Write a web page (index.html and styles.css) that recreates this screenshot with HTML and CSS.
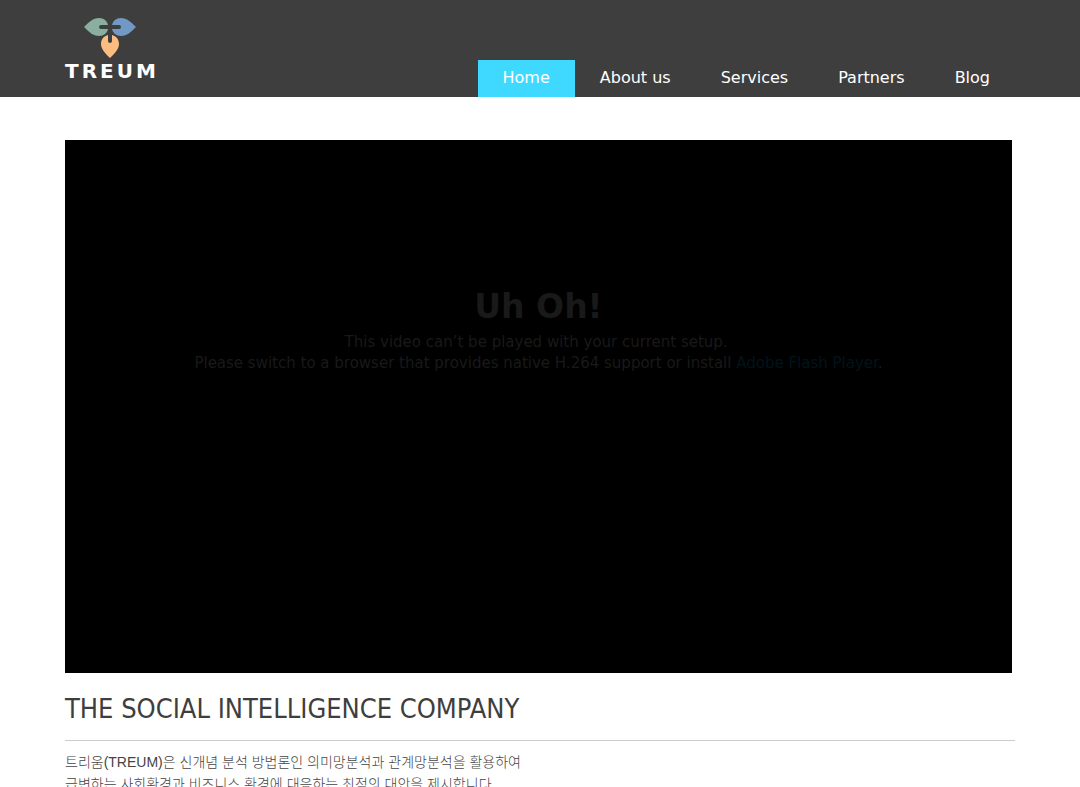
FILE: index.html
```
<!DOCTYPE html>
<html lang="ko">
<head>
    <meta charset="UTF-8">
    <meta name="viewport" content="width=device-width, initial-scale=1.0">
    <title>TREUM</title>
    <link rel="stylesheet" href="styles.css">
</head>
<body>
    <header class="header">
        <div class="container header-inner">
            <a class="logo" href="#">
                <svg class="logo-mark" viewBox="0 0 52 40" aria-hidden="true">
                    <path fill="#8aae9f" d="M0 9C5 4 9 0 15 0C20 0 23 3 24 7H17Q15 7 15 9Q15 11 17 11H24C23 15 20 18 15 18C9 18 5 14 0 9Z"/>
                    <path fill="#7299c6" d="M52 9C47 4 43 0 37 0C32 0 29 3 28 7H35Q37 7 37 9Q37 11 35 11H28C29 15 32 18 37 18C43 18 47 14 52 9Z"/>
                    <path fill="#fdbd80" d="M26 40C21 35 17 31 17 26C17 21 20 18 24 17V23Q24 25 26 25Q28 25 28 23V17C32 18 35 21 35 26C35 31 31 35 26 40Z"/>
                </svg>
                <span class="logo-text">TREUM</span>
            </a>
            <nav class="menu">
                <a class="menu-item active" href="#">Home</a>
                <a class="menu-item" href="#">About us</a>
                <a class="menu-item" href="#">Services</a>
                <a class="menu-item" href="#">Partners</a>
                <a class="menu-item" href="#">Blog</a>
            </nav>
        </div>
    </header>

    <main class="container">
        <div class="video">
            <div class="video-message">
                <h2>Uh Oh!</h2>
                <p>This video can’t be played with your current setup.&nbsp;<br>
                Please switch to a browser that provides native H.264 support or install <a href="#">Adobe Flash Player</a>.</p>
            </div>
        </div>
        <h1 class="title">THE SOCIAL INTELLIGENCE COMPANY</h1>
        <p class="intro">트리움(TREUM)은 신개념 분석 방법론인 의미망분석과 관계망분석을 활용하여<br>
        급변하는 사회환경과 비즈니스 환경에 대응하는 최적의 대안을 제시합니다.</p>
    </main>
</body>
</html>
```
FILE: styles.css
```
body {
    font-family: "DejaVu Sans", sans-serif;
    background-color: #fff;
    color: #3e3e3e;
    margin: 0;
}
a {
    text-decoration: none;
}
.container {
    max-width: 950px;
    margin: 0 auto;
}
.header {
    background-color: #3e3e3e;
}
.header-inner {
    display: flex;
    justify-content: space-between;
    align-items: flex-end;
}
.logo {
    display: flex;
    flex-direction: column;
    align-items: center;
    padding: 18px 0 12px;
    color: #fff;
}
.logo-mark {
    width: 52px;
    height: 40px;
}
.logo-text {
    margin-right: -3px;
    font-size: 20px;
    font-weight: bold;
    line-height: 27px;
    letter-spacing: 3px;
}
.menu {
    display: flex;
}
.menu-item {
    padding: 0 25px 2px;
    font-size: 16px;
    line-height: 35px;
    color: #fff;
}
.menu-item.active {
    background-color: #3fd9ff;
}
.video {
    display: flex;
    flex-direction: column;
    align-items: center;
    justify-content: center;
    box-sizing: border-box;
    aspect-ratio: 947 / 533;
    margin: 43px 3px 0 0;
    padding-bottom: 154px;
    background-color: #000;
}
.video-message {
    text-align: center;
    font-size: 15px;
    line-height: 21px;
    color: #191919;
}
.video-message h2 {
    margin: 0 0 4px;
    font-size: 33px;
    line-height: 42px;
}
.video-message p {
    margin: 0;
}
.video-message a {
    color: #00141b;
}
.title {
    margin: 0;
    padding: 19px 0 14px;
    border-bottom: 1px solid #ccc;
    font-family: "DejaVu Sans Condensed", "DejaVu Sans", sans-serif;
    font-size: 27px;
    font-weight: normal;
    line-height: 34px;
}
.intro {
    margin: 10px 0 20px;
    font-family: "Liberation Sans", "Noto Sans CJK KR", sans-serif;
    font-size: 14px;
    font-weight: 300;
    line-height: 22px;
    color: #444;
}
```
